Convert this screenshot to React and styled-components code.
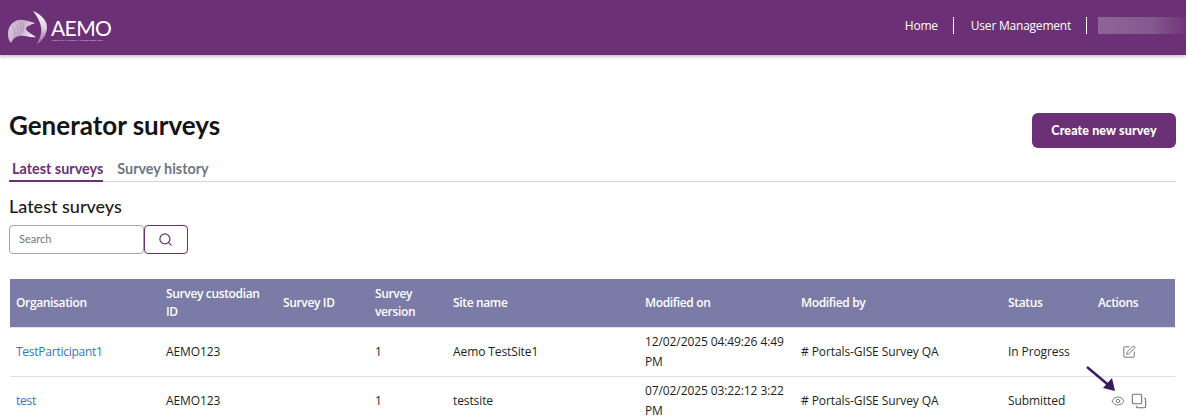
import React from "react";
import styled, { createGlobalStyle } from "styled-components";
import { Search, SquarePen, Eye, Copy } from "lucide-react";

const GlobalStyle = createGlobalStyle`
  html, body {
    margin: 0;
    padding: 0;
    background: #fff;
    overflow: hidden;
    font-family: "Lato", "Liberation Sans", sans-serif;
  }
`;

const Header = styled.header`
  height: 55px;
  background-color: #6c3076;
  box-shadow: 0 2px 3px rgba(90, 60, 110, 0.3);
  display: flex;
  align-items: center;
  justify-content: space-between;
  padding-left: 8px;
`;

const Logo = styled.div`
  display: flex;
  align-items: center;
  gap: 1px;
  color: #fff;
`;

const LogoWords = styled.div`
  display: flex;
  flex-direction: column;
  margin-top: 6px;
`;

const LogoName = styled.span`
  font-family: "Lato", sans-serif;
  font-weight: 400;
  font-size: 21px;
  line-height: 20px;
  letter-spacing: -0.6px;
`;

const LogoTag = styled.span`
  font-size: 2.6px;
  line-height: 5px;
  white-space: nowrap;
  opacity: 0.75;
`;

const Nav = styled.nav`
  display: flex;
  align-items: center;
  margin-top: -4px;
`;

const NavLink = styled.a`
  font-family: "Open Sans", sans-serif;
  font-size: 12px;
  font-weight: 500;
  letter-spacing: -0.22px;
  color: #fff;
  padding: 0 15px 0 17px;
  height: 17px;
  line-height: 17px;
  border-right: 1px solid #fff;
`;

const UserName = styled.div`
  width: 88px;
  height: 17px;
  margin-left: 11px;
  background: linear-gradient(90deg, #8f6498, #85598f 60%, #6f3579);
`;

const Page = styled.main`
  position: relative;
  padding: 58px 10px 0 9px;
`;

const TitleRow = styled.div`
  display: flex;
  align-items: flex-start;
  justify-content: space-between;
  height: 48px;
`;

const Title = styled.h1`
  margin: -3px 0 0;
  font-size: 26px;
  line-height: 30px;
  font-weight: 700;
  color: #141414;
`;

const CreateButton = styled.button`
  width: 144px;
  height: 35px;
  border: 0;
  border-radius: 6px;
  background-color: #6c3076;
  color: #fff;
  font-family: "Lato", sans-serif;
  font-size: 12.5px;
  font-weight: 900;
  letter-spacing: 0.1px;
`;

const Tabs = styled.div`
  display: flex;
  gap: 11px;
  height: 21px;
  margin-top: -1px;
  border-bottom: 1px solid #d5d5d8;
`;

const Tab = styled.div`
  padding: 0 0 0 3px;
  height: 20px;
  line-height: 17px;
  font-size: 14.4px;
  font-weight: 700;
  color: ${(props) => (props.$active ? "#6c3076" : "#6f7585")};
  border-bottom: ${(props) => (props.$active ? "2px solid #6c3076" : "0")};
`;

const SectionTitle = styled.h2`
  margin: 13px 0 8px;
  font-size: 18px;
  line-height: 22px;
  font-weight: 500;
  color: #1a1a1a;
`;

const SearchRow = styled.div`
  display: flex;
  height: 29px;
`;

const SearchInput = styled.input`
  box-sizing: border-box;
  width: 135px;
  height: 29px;
  padding: 0 9px 2px;
  border: 1px solid #a0a4ab;
  border-radius: 4px;
  font-family: "Lato", sans-serif;
  font-size: 11px;

  &::placeholder {
    color: #6f7585;
  }
`;

const SearchButton = styled.button`
  box-sizing: border-box;
  width: 44px;
  height: 29px;
  padding: 0 2px 0 0;
  border: 1px solid #6c3076;
  border-radius: 4px;
  background: #fff;
  color: #6c3076;
  display: flex;
  align-items: center;
  justify-content: center;
`;

const Table = styled.table`
  width: 1165px;
  margin: 25px 0 0 1px;
  border-collapse: collapse;
  table-layout: fixed;
  font-family: "Open Sans", sans-serif;
  font-size: 12px;
  letter-spacing: -0.1px;
`;

const HeadCell = styled.th`
  height: 48px;
  padding: 0 6px;
  background-color: #7a7ba6;
  border-bottom: 1px solid #dee2e6;
  color: #fff;
  font-weight: 600;
  letter-spacing: -0.35px;
  line-height: 18px;
  text-align: left;
  box-sizing: border-box;
`;

const Cell = styled.td`
  height: 49px;
  padding: 0 6px;
  border-bottom: 1px solid #dee2e6;
  color: #1c1f23;
  font-weight: 500;
  line-height: 20px;
  box-sizing: border-box;
`;

const OrgLink = styled.a`
  color: #2f78bd;
  font-weight: 400;
  letter-spacing: -0.25px;
`;

const Actions = styled.div`
  display: flex;
  justify-content: center;
  align-items: center;
  gap: 6px;
  padding-right: 9px;
  color: #69707a;
`;

const CopyIcon = styled(Copy)`
  transform: rotate(180deg);
`;

const Arrow = styled.svg`
  position: absolute;
  left: 1086px;
  top: 307px;
`;

const columns = [
  { label: "Organisation", width: 150 },
  { label: "Survey custodian ID", width: 117 },
  { label: "Survey ID", width: 92 },
  { label: "Survey version", width: 78 },
  { label: "Site name", width: 192 },
  { label: "Modified on", width: 156 },
  { label: "Modified by", width: 207 },
  { label: "Status", width: 90 },
  { label: "Actions", width: 83 },
];

const surveys = [
  {
    org: "TestParticipant1",
    site: "Aemo TestSite1",
    modified: "12/02/2025 04:49:26 4:49 PM",
    status: "In Progress",
    editable: true,
  },
  {
    org: "test",
    site: "testsite",
    modified: "07/02/2025 03:22:12 3:22 PM",
    status: "Submitted",
    editable: false,
  },
];

const LogoMark = () => (
  <svg width="42" height="36" viewBox="0 0 42 36" fill="none">
    <defs>
      <linearGradient id="blob" x1="0" y1="0" x2="1" y2="0.3">
        <stop offset="0" stopColor="#fff" stopOpacity="0.75" />
        <stop offset="0.55" stopColor="#e6d8e8" stopOpacity="0.75" />
        <stop offset="1" stopColor="#fff" stopOpacity="0.9" />
      </linearGradient>
      <linearGradient id="crescent" x1="0" y1="0" x2="0" y2="1">
        <stop offset="0" stopColor="#fff" />
        <stop offset="0.5" stopColor="#eee3f0" stopOpacity="0.9" />
        <stop offset="1" stopColor="#c9b3cd" stopOpacity="0.6" />
      </linearGradient>
    </defs>
    <path d="M25 1C34 5 39 11 39 17C39 24 35 30 29 34C32 28 34 23 33 17C32 11 29 6 25 1Z" fill="url(#crescent)" />
    <path
      d="M0 24C0 17 4 11 11 10C17 9 21 12 27 13C23 15 18 16 18 19C19 22 24 24 28 27C22 28 17 25 11 26C7 27 4 30 3 33C1 31 0 28 0 24Z"
      fill="url(#blob)"
    />
    <g stroke="#6c3076" strokeWidth="0.4" opacity="0.55">
      <path d="M3 15C8 19 8 25 5 30" />
      <path d="M6 12C11 17 11 22 8 27" />
      <path d="M9 11C14 15 14 20 12 25" />
      <path d="M12 10C16 14 16 18 15 22" />
      <path d="M29 22L38 24" />
      <path d="M29 25L37 27" />
      <path d="M29 28L35 30" />
    </g>
  </svg>
);

const App = () => {
  return (
    <>
      <GlobalStyle />
      <Header>
        <Logo>
          <LogoMark />
          <LogoWords>
            <LogoName>AEMO</LogoName>
            <LogoTag>AUSTRALIAN ENERGY MARKET OPERATOR</LogoTag>
          </LogoWords>
        </Logo>
        <Nav>
          <NavLink>Home</NavLink>
          <NavLink>User Management</NavLink>
          <UserName />
        </Nav>
      </Header>
      <Page>
        <TitleRow>
          <Title>Generator surveys</Title>
          <CreateButton>Create new survey</CreateButton>
        </TitleRow>
        <Tabs>
          <Tab $active>Latest surveys</Tab>
          <Tab>Survey history</Tab>
        </Tabs>
        <SectionTitle>Latest surveys</SectionTitle>
        <SearchRow>
          <SearchInput placeholder="Search" />
          <SearchButton>
            <Search size={15} strokeWidth={2} />
          </SearchButton>
        </SearchRow>
        <Table>
          <colgroup>
            {columns.map((col) => (
              <col key={col.label} width={col.width} />
            ))}
          </colgroup>
          <thead>
            <tr>
              {columns.map((col) => (
                <HeadCell key={col.label}>{col.label}</HeadCell>
              ))}
            </tr>
          </thead>
          <tbody>
            {surveys.map((survey) => (
              <tr key={survey.org}>
                <Cell>
                  <OrgLink>{survey.org}</OrgLink>
                </Cell>
                <Cell>AEMO123</Cell>
                <Cell></Cell>
                <Cell>1</Cell>
                <Cell>{survey.site}</Cell>
                <Cell>{survey.modified}</Cell>
                <Cell># Portals-GISE Survey QA</Cell>
                <Cell>{survey.status}</Cell>
                <Cell>
                  <Actions>
                    {survey.editable ? (
                      <SquarePen size={14} strokeWidth={1.6} />
                    ) : (
                      <>
                        <Eye size={14} strokeWidth={1.5} />
                        <CopyIcon size={16} strokeWidth={1.6} />
                      </>
                    )}
                  </Actions>
                </Cell>
              </tr>
            ))}
          </tbody>
        </Table>
        <Arrow width="32" height="32" viewBox="0 0 32 32" fill="none">
          <path d="M1 5L26 26" stroke="#3a1a5e" strokeWidth="2.4" />
          <path d="M29 29L26 16L17 26Z" fill="#3a1a5e" />
        </Arrow>
      </Page>
    </>
  );
};

export default App;
